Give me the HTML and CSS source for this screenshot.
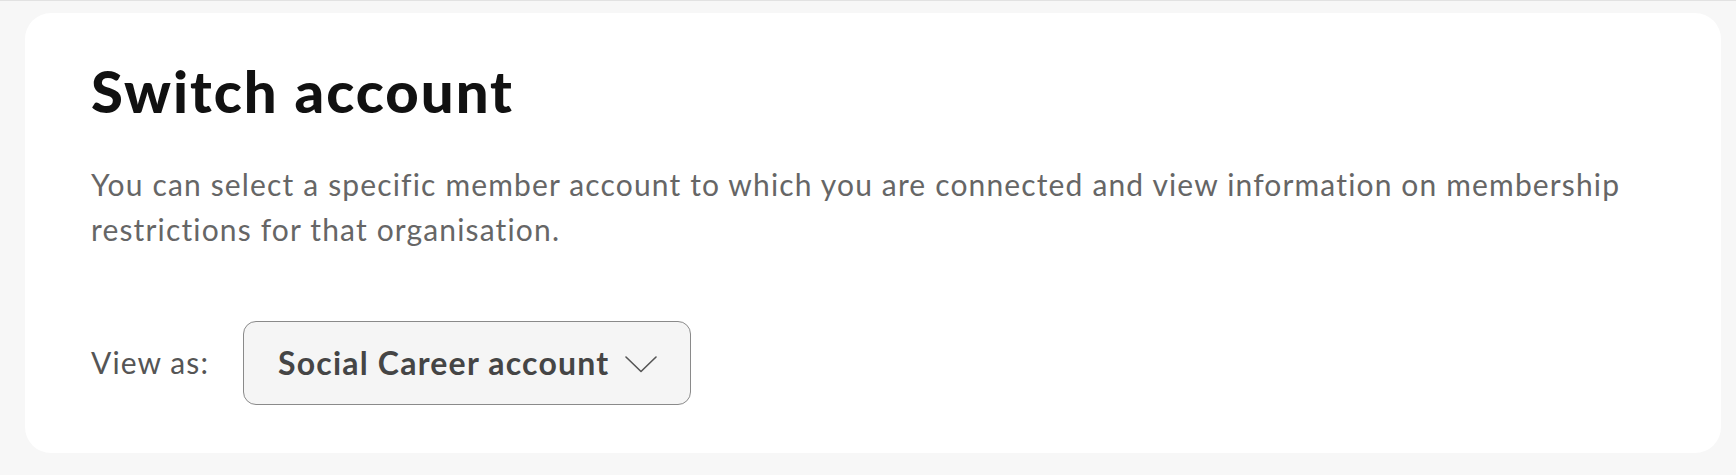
FILE: index.html
```html
<!DOCTYPE html>
<html lang="en">
<head>
  <meta charset="UTF-8" />
  <meta name="viewport" content="width=device-width, initial-scale=1.0"/>
  <title>Switch account</title>
  <link rel="stylesheet" href="styles.css">
</head>
<body>
  <div class="card">
    <h1 class="title">Switch account</h1>
    <p class="intro">You can select a specific member account to which you are connected and view information on membership restrictions for that organisation.</p>

    <div class="view-row">
      <span class="view-label">View as:</span>
      <button class="account-select">
        <span>Social Career account</span>
        <svg class="chevron" width="32" height="17" viewBox="0 0 32 17" fill="none">
          <path d="M1 1 L16 15.5 L31 1" stroke="#555" stroke-width="1.6" stroke-linecap="round" stroke-linejoin="round"/>
        </svg>
      </button>
    </div>
  </div>
</body>
</html>
```

FILE: styles.css
```css
body {
  margin: 0;
  background: #f7f7f7;
  border-top: 1px solid #e2e2e2;
  font-family: Lato, "Noto Sans", sans-serif;
  height: 474px;
}
.card {
  background: #fff;
  margin: 12px 15px 0 25px;
  border-radius: 26px;
  padding: 43px 66px 48px 66px;
}
.title {
  margin: 0;
  font-size: 58px;
  font-weight: 900;
  line-height: 1.2;
  letter-spacing: 2px;
  color: #111;
}
.intro {
  margin: 36px 0 0 0;
  font-size: 30px;
  line-height: 45px;
  letter-spacing: 1.15px;
  color: #666;
}
.view-row {
  display: flex;
  align-items: center;
  gap: 34px;
  margin-top: 69px;
}
.view-label {
  font-size: 30px;
  line-height: 45px;
  letter-spacing: 1.1px;
  color: #555;
}
.account-select {
  display: flex;
  align-items: center;
  gap: 16px;
  height: 84px;
  padding: 0 33px 0 34px;
  background: #f5f5f5;
  border: 1px solid #8a8a8a;
  border-radius: 13px;
  font-family: inherit;
  font-size: 32px;
  font-weight: 700;
  letter-spacing: 1.2px;
  color: #454545;
  cursor: pointer;
}
.chevron {
  display: block;
  margin-top: 3px;
}
```
